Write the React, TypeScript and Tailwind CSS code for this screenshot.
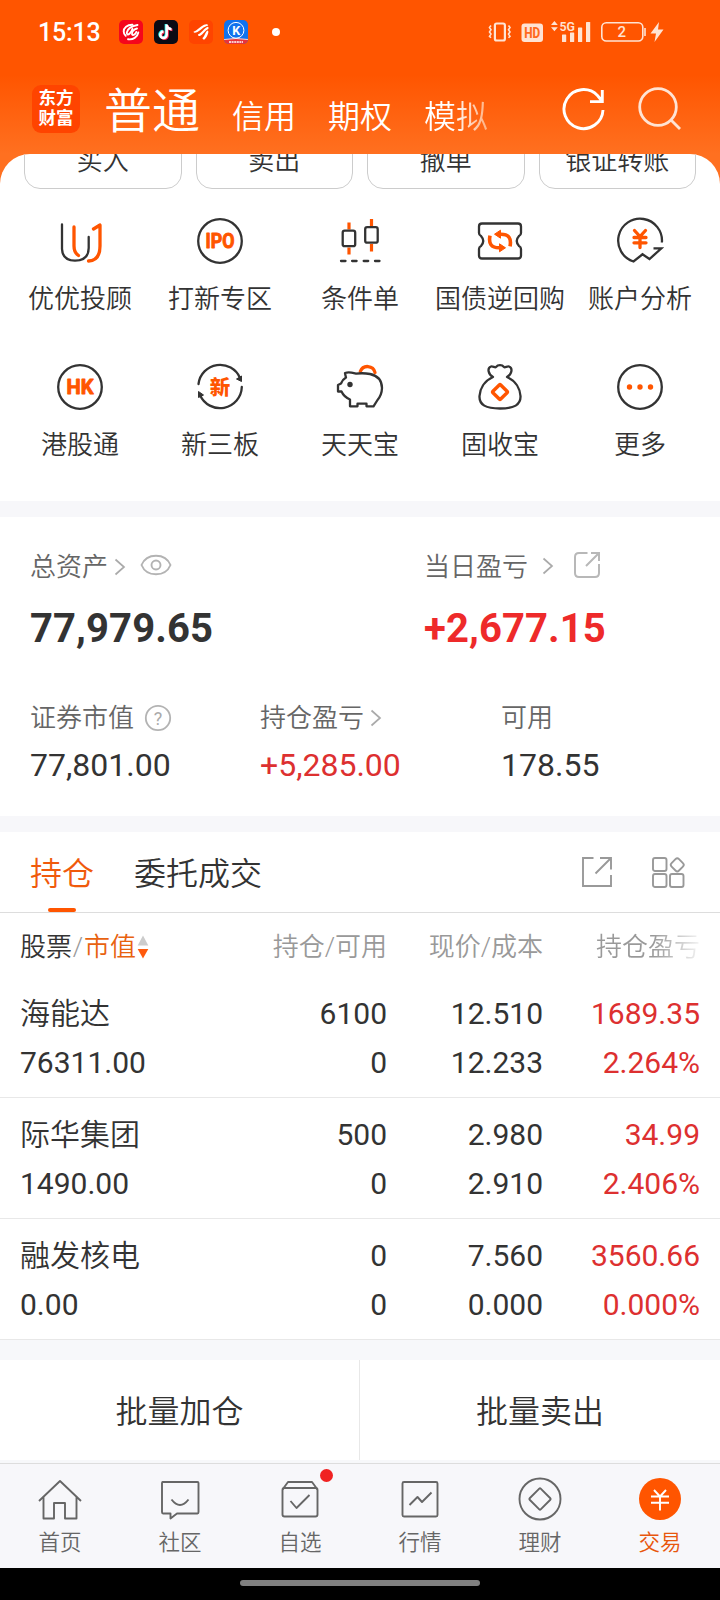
import React from "react";

const DARK = "#333333";
const ORANGE = "#ff5500";

/* ---------- status bar ---------- */

function StatusBar() {
  return (
    <div className="flex h-16 items-center pl-[38px] pr-[55px] text-white">
      <div className="w-[81px] font-[Roboto] text-[25px] leading-none font-medium tracking-[-0.2px]">15:13</div>
      <div className="flex items-center gap-[11px]">
        <svg width="24" height="24" viewBox="0 0 24 24">
          <rect width="24" height="24" rx="5" fill="#f5061c" />
          <g fill="none" stroke="#fff" strokeWidth="1.900" strokeLinecap="round">
            <path d="M13.500 4.700C8 4.500 4.700 8 4.700 11.500c0 2 .800 3.300 2 4.300" />
            <path d="M18.500 5C13 6 8.500 9 7.800 12.500c-.300 2 1.200 2.500 2.700 1.300 1.700-1.400 2.500-3 3-5" />
            <path d="M18 8.500c-3.500.700-5.500 3.500-5 5.700.800 1.800 3.500.300 4.300-2.200" />
            <path d="M9 19.200c5 .800 9.500-2 10.300-6.700" />
          </g>
        </svg>
        <svg width="24" height="24" viewBox="0 0 24 24">
          <rect width="24" height="24" rx="5" fill="#0b0b14" />
          <g fill="none" strokeWidth="2.500">
            <path d="M12.700 4.500v10.300a3.200 3.200 0 1 1-3.200-3.200M12.700 5c.300 2.600 2 4 4.800 4.200" stroke="#25f4ee" transform="translate(-.8 -.5)" />
            <path d="M12.700 4.500v10.300a3.200 3.200 0 1 1-3.200-3.200M12.700 5c.300 2.600 2 4 4.800 4.200" stroke="#fe2c55" transform="translate(.9 .7)" />
            <path d="M12.700 4.500v10.300a3.200 3.200 0 1 1-3.200-3.200M12.700 5c.300 2.600 2 4 4.800 4.200" stroke="#fff" />
          </g>
        </svg>
        <svg width="24" height="24" viewBox="0 0 24 24">
          <rect width="24" height="24" rx="5" fill="#ff4400" />
          <g fill="#fff">
            <path d="M4.500 11.700C8 10.500 11 7 15 4.800c2-.900 4-.600 4.200.600C15 6 11 11 7 12.600c-1.200.400-2.300 0-2.500-.900z" />
            <path d="M9 14.500C13 13 14.500 8.500 18.800 6.800c1 .300 1 1.700.300 2.300C16 10.500 14 14.500 11 16c-1.200.400-2.200-.500-2-1.500z" />
            <path d="M13.500 18c2.500-2 2.300-5.500 5-7.500 1 .300 1 1.500.700 2.500-.700 2.500-1.700 4.700-3.700 6.500-1.200.300-2-.500-2-1.500z" />
          </g>
        </svg>
        <svg width="24" height="24" viewBox="0 0 24 24">
          <defs>
            <clipPath id="app-k"><rect width="24" height="24" rx="5" /></clipPath>
          </defs>
          <g clipPath="url(#app-k)">
            <rect width="24" height="24" fill="#1173ee" />
            <path d="M0 19.500Q12 17.500 24 19.500V24H0z" fill="#e8343a" />
            <path d="M0 19.500Q12 17.500 24 19.500" stroke="#f5d9df" strokeWidth="1" fill="none" />
            <circle cx="12" cy="10.300" r="7.900" fill="none" stroke="#fff" strokeWidth="1" />
            <text x="12.200" y="14.700" textAnchor="middle" fontFamily="Roboto" fontWeight="700" fontSize="12.500" fill="#fff">K</text>
            <path d="M5 22h14" stroke="#fff" strokeWidth="1.600" strokeDasharray="2 .6" />
          </g>
        </svg>
      </div>
      <div className="ml-6 size-2 rounded-full bg-white" />
      <svg className="ml-auto" width="178" height="28" viewBox="487 18 178 28">
        <g fill="none" stroke="#ffe3d3">
          <rect x="494.900" y="23.500" width="10" height="17" rx="1.800" strokeWidth="2.200" />
          <path d="M491 25.500l-1.500 2 1.500 2.200-1.500 2.200 1.500 2.200-1.500 2.200 1.500 1.500M508.500 25.500l1.500 2-1.500 2.200 1.500 2.200-1.500 2.200 1.500 2.200-1.500 1.500" strokeWidth="1.600" />
          <rect x="601.800" y="22.800" width="41" height="18.200" rx="4.500" strokeWidth="1.600" />
          <path d="M645 28v8" strokeWidth="1.600" />
        </g>
        <g fill="#ffe3d3">
          <rect x="521.500" y="23.500" width="21.500" height="18.500" rx="3" />
          <text x="532.200" y="38" textAnchor="middle" fontFamily="Roboto" fontWeight="800" fontSize="15" textLength="16" lengthAdjust="spacingAndGlyphs" style={{ fill: "#ff6a20" }}>HD</text>
          <path d="M551 25l3.400-4 3.400 4zM551 27.200l3.400 4 3.400-4z" />
          <text x="559.500" y="30.700" fontFamily="Roboto" fontWeight="600" fontSize="13" textLength="15.500" lengthAdjust="spacingAndGlyphs">5G</text>
          <rect x="562" y="34.500" width="4.200" height="7.500" rx=".6" />
          <rect x="570" y="32.500" width="4.200" height="9.500" rx=".6" />
          <rect x="578" y="27.500" width="4.200" height="14.500" rx=".6" />
          <rect x="586" y="22" width="4.200" height="20" rx=".6" />
          <text x="621.800" y="37.300" textAnchor="middle" fontFamily="Roboto" fontWeight="500" fontSize="15">2</text>
          <path d="M659 22l-8.500 11.500h5.500l-1.500 8.500 9-12.500h-5.500z" />
        </g>
      </svg>
    </div>
  );
}

/* ---------- title bar ---------- */

function TitleBar() {
  return (
    <div className="flex h-[90px] items-start pl-8 pr-[38px] text-white">
      <div className="mt-[21px] flex size-12 flex-col items-center justify-center rounded-[9px] bg-[#ff4400] pb-0.5 text-[17.500px] leading-5 font-bold">
        <span>东方</span>
        <span>财富</span>
      </div>
      <div className="ml-6 flex items-baseline gap-8 pt-3 text-[32px] leading-[72px]">
        <span className="text-[48px]">普通</span>
        <span>信用</span>
        <span>期权</span>
        <span className="bg-[linear-gradient(90deg,#fff_45%,#ffb080_100%)] bg-clip-text text-transparent">模拟</span>
      </div>
      <svg className="mt-[22px] ml-auto" width="44" height="46" viewBox="562 86 44 46" fill="none" stroke="#fff" strokeWidth="2.900">
        <path d="M603 110A19.500 19.500 0 1 1 597.500 95.500L602 101M602.300 90v11.600H590" />
      </svg>
      <svg className="mt-[22px] ml-8" width="44" height="46" viewBox="638 86 44 46" fill="none" stroke="#ffe3d3" strokeWidth="2.800">
        <circle cx="658" cy="107" r="18.300" />
        <path d="M670.500 119.500l9.500 9.500" />
      </svg>
    </div>
  );
}

/* ---------- shortcuts ---------- */

const line = { fill: "none", stroke: DARK, strokeWidth: 2.3, strokeLinecap: "round", strokeLinejoin: "round" } as const;
const accent = { fill: "none", stroke: ORANGE, strokeWidth: 3.6, strokeLinecap: "round", strokeLinejoin: "round" } as const;
const glyph = { textAnchor: "middle", fontFamily: "Roboto", fontWeight: 700, lengthAdjust: "spacingAndGlyphs", fill: ORANGE, stroke: ORANGE, strokeWidth: 0.9, strokeLinejoin: "round" } as const;

function Icon({ children }: { children: React.ReactNode }) {
  return (
    <svg width="48" height="48" viewBox="-24 -24 48 48">
      {children}
    </svg>
  );
}

const shortcuts: { label: string; icon: React.ReactNode }[] = [
  {
    label: "优优投顾",
    icon: (
      <>
        <path {...line} d="M-18-16.500V8Q-17.500 19.500-5 19.700Q8.700 19.500 8.700 7V-4" />
        <path {...accent} strokeWidth={3.3} d="M-6-14V5Q-6 11.500-1.500 14.500M13.500-12L20-16V5Q20 19.500 8.500 20" />
      </>
    ),
  },
  {
    label: "打新专区",
    icon: (
      <>
        <circle {...line} r="21.800" />
        <text {...glyph} y="7" fontSize="19.500" textLength="29">IPO</text>
      </>
    ),
  },
  {
    label: "条件单",
    icon: (
      <>
        <path {...accent} strokeWidth={3.2} strokeLinecap="butt" d="M-11-18.500v7M-11 6.500v7M11.500-22v7M11.500 3v7.500" />
        <rect {...line} x="-17.300" y="-10.300" width="12.500" height="15.500" rx="2" />
        <rect {...line} x="5.200" y="-13.800" width="12.500" height="15.500" rx="2" />
        <path {...line} d="M-19 20h4.500M-7.900 20h4.500M3.700 20h4.500M15 20h4.500" />
      </>
    ),
  },
  {
    label: "国债逆回购",
    icon: (
      <>
        <path {...line} d="M-18-17.500H18Q21-17.500 21-14.500V-8Q21-6 19-5Q14.500 0 19 5Q21 6 21 8V14.500Q21 17.500 18 17.500H-18Q-21 17.500-21 14.500V8Q-21 6-19 5Q-14.500 0-19-5Q-21-6-21-8V-14.500Q-21-17.500-18-17.500z" />
        <path {...accent} strokeLinecap="butt" d="M-10-5.300Q-12.500 6.700-1 6.800H2M10 5.300Q12.500-6.700 1-6.800H-2" />
        <path d="M-5.500-6.800L.5-10.800V-2.800zM5.500 6.800L-.5 10.800V2.800z" fill={ORANGE} stroke={ORANGE} strokeLinejoin="round" />
      </>
    ),
  },
  {
    label: "账户分析",
    icon: (
      <>
        <path {...line} strokeLinecap="butt" strokeLinejoin="miter" d="M21.900 1.500A21.900 21.900 0 1 0-6.500 20.500L2.500 13.300L9.500 18L21.500 7.300H13.500" />
        <path {...accent} strokeWidth={3.300} d="M-5.500-10.500L0-4.500L5.500-10.500M0-4.500V6.500M-6-3.500H6M-6 1.800H6" />
      </>
    ),
  },
  {
    label: "港股通",
    icon: (
      <>
        <circle {...line} r="21.800" />
        <text {...glyph} y="7" fontSize="19.500" textLength="27">HK</text>
      </>
    ),
  },
  {
    label: "新三板",
    icon: (
      <>
        <path {...line} d="M-21.500-3A21.700 21.700 0 0 1 20-9M21.800 0A21.800 21.800 0 0 1-20 8" />
        <path d="M16.500-8l5-3v5.500zM-16.500 8l-5 2.500v-6z" fill={DARK} stroke={DARK} />
        <text y="7.500" textAnchor="middle" fontFamily="Noto Sans CJK SC" fontWeight="900" fontSize="20.500" fill={ORANGE}>新</text>
      </>
    ),
  },
  {
    label: "天天宝",
    icon: (
      <>
        <path {...accent} strokeWidth={3.300} d="M.3-15.500A7.700 7.700 0 0 1 15-14.500" />
        <path {...line} d="M-15-14Q-12-15-8.500-14.300Q-6-13.700-4-13.300Q3-14.300 10-13Q21.800-10.500 22 1Q21.800 8 17.500 13L13.500 19.300H6.500V16.700H-2.500V19.300H-10V12.500Q-16 10-18.500 4.500H-22V-2L-19-3.500Q-17.500-7.500-14-9.500Q-14.500-11-15-14z" />
        <circle cx="-10" cy="-2.500" r="2.700" fill={DARK} />
      </>
    ),
  },
  {
    label: "固收宝",
    icon: (
      <>
        <path {...line} d="M-7-10C-12-13-13-19-9-20.500C-7-21-5-19-4-20C-2-22.500 2-22.500 4-20C5-19 7-21 9-20.500C13-19 12-13 7-10C16-6 20 2 20.500 9C21 18 14 21.500 0 21.500S-21 18-20.500 9C-20 2-16-6-7-10z" />
        <rect {...accent} strokeWidth={3.400} x="-5.500" y="-5.500" width="11" height="11" rx="1" transform="translate(0 5) rotate(45)" />
      </>
    ),
  },
  {
    label: "更多",
    icon: (
      <>
        <circle {...line} r="21.800" />
        <g fill={ORANGE}>
          <circle cx="-10.500" r="2.700" />
          <circle r="2.700" />
          <circle cx="10.500" r="2.700" />
        </g>
      </>
    ),
  },
];

function Shortcuts() {
  return (
    <div className="grid grid-cols-5 px-2.5 pt-7">
      {shortcuts.map((s) => (
        <div key={s.label} className="flex h-[146px] flex-col items-center">
          <Icon>{s.icon}</Icon>
          <span className="mt-[17px] text-[26px] leading-[34px] whitespace-nowrap">{s.label}</span>
        </div>
      ))}
    </div>
  );
}

/* ---------- assets ---------- */

function Chevron({ className = "" }: { className?: string }) {
  return (
    <svg className={className} width="12" height="18" viewBox="0 0 12 18" fill="none" stroke="#aaa" strokeWidth="1.700">
      <path d="M1.500 1.500L10 9l-8.500 7.500" />
    </svg>
  );
}

function Assets() {
  return (
    <div className="h-[299px] text-[26px] leading-[34px] text-[#666]">
      <div className="flex pt-[33px]">
        <div className="w-[424px] pl-[30px]">
          <div className="flex items-center">
            总资产
            <Chevron className="ml-[6px]" />
            <svg className="mb-1 ml-3.5" width="32" height="22" viewBox="0 0 32 22" fill="none" stroke="#b3b3b3" strokeWidth="1.900">
              <path d="M1.500 11C4 5 9.500 1.700 16 1.700S28 5 30.500 11C28 17 22.500 20.300 16 20.300S4 17 1.500 11z" />
              <circle cx="16" cy="11" r="4.500" />
            </svg>
          </div>
          <div className="mt-[22px] text-[40px] leading-[46px] font-bold tracking-[0.1px] text-[#333]">77,979.65</div>
        </div>
        <div>
          <div className="flex items-center">
            当日盈亏
            <Chevron className="mb-0.5 ml-[14px]" />
            <svg className="mb-1 ml-[19px]" width="28" height="28" viewBox="0 0 28 28" fill="none" stroke="#b8b8b8" strokeWidth="2">
              <path d="M14.500 2H6Q2 2 2 6V22Q2 26 6 26H22Q26 26 26 22V13M18 2h8v8M26 2L13 15" />
            </svg>
          </div>
          <div className="mt-[22px] text-[40px] leading-[46px] font-bold tracking-[0.1px] text-[#ee2a2a]">+2,677.15</div>
        </div>
      </div>
      <div className="mt-[49px] flex">
        <div className="w-[230px] pl-[30px]">
          <div className="flex items-center">
            证券市值
            <svg className="ml-[10px]" width="28" height="28" viewBox="0 0 28 28">
              <circle cx="14" cy="14" r="12.200" fill="none" stroke="#b3b3b3" strokeWidth="1.800" />
              <text x="14" y="20.500" textAnchor="middle" fontFamily="Roboto" fontWeight="400" fontSize="18" fill="#aaa">?</text>
            </svg>
          </div>
          <div className="mt-3 text-[32px] leading-9 font-normal text-[#333]">77,801.00</div>
        </div>
        <div className="w-[271px] pl-[30px]">
          <div className="flex items-center">
            持仓盈亏
            <Chevron className="ml-1.5" />
          </div>
          <div className="mt-3 text-[32px] leading-9 font-normal text-[#dd3030]">+5,285.00</div>
        </div>
        <div>
          <div>可用</div>
          <div className="mt-3 text-[32px] leading-9 font-normal text-[#333]">178.55</div>
        </div>
      </div>
    </div>
  );
}

/* ---------- holdings ---------- */

const holdings = [
  { name: "海能达", value: "76311.00", qty: "6100", free: "0", price: "12.510", cost: "12.233", profit: "1689.35", rate: "2.264%" },
  { name: "际华集团", value: "1490.00", qty: "500", free: "0", price: "2.980", cost: "2.910", profit: "34.99", rate: "2.406%" },
  { name: "融发核电", value: "0.00", qty: "0", free: "0", price: "7.560", cost: "0.000", profit: "3560.66", rate: "0.000%" },
];

function Holdings() {
  return (
    <div>
      <div className="flex h-[81px] items-start border-b border-[#ddd] pr-[34px] pl-[30px] text-[32px] leading-[42px]">
        <div className="flex h-[80px] flex-col items-center justify-between pt-[21px] text-[#f05a0c]">
          持仓
          <div className="h-1 w-7 rounded-sm bg-[#ff5500]" />
        </div>
        <div className="ml-10 pt-[21px]">委托成交</div>
        <svg className="mt-6 ml-auto" width="32" height="32" viewBox="0 0 32 32" fill="none" stroke="#999" strokeWidth="1.900">
          <path d="M12.500 2H2V30H30V19M19 2H30V13.500M30 2L14.500 17.500" />
        </svg>
        <svg className="mt-6 ml-[39px]" width="34" height="34" viewBox="0 0 34 34" fill="none" stroke="#999" strokeWidth="1.900">
          <rect x="1" y="2" width="13.500" height="13" rx="2" />
          <rect x="1" y="18" width="13.500" height="13" rx="2" />
          <rect x="18" y="18" width="13.500" height="13" rx="2" />
          <rect x="20" y="3.600" width="10.500" height="10.500" rx="2.500" transform="rotate(45 25.250 8.850)" />
        </svg>
      </div>
      <div className="grid h-[64px] grid-cols-[187px_180px_156px_157px] items-center px-5 pt-[3px] text-right text-[26px] leading-[34px] text-[#999]">
        <div className="flex items-center">
          <span className="text-[#333]">股票</span>
          <span className="w-3 text-center">/</span>
          <span className="text-[#e8620f]">市值</span>
          <svg className="ml-px" width="12" height="26" viewBox="0 0 12 26">
            <path d="M6 1.500l5.300 10H.7z" fill="#ccc" />
            <path d="M6 24.500l5.300-9.500H.7z" fill="#ff5a0c" />
          </svg>
        </div>
        <div>持仓/可用</div>
        <div>现价/成本</div>
        <div className="overflow-hidden pl-[53px] text-left whitespace-nowrap">
          <span className="bg-[linear-gradient(90deg,#999_55%,#f4f4f4_100%)] bg-clip-text text-transparent">持仓盈亏</span>
        </div>
      </div>
      {holdings.map((h) => (
        <div key={h.name} className="grid h-[121px] grid-cols-[187px_180px_156px_157px] content-center gap-y-[11px] border-b border-[#e8e8e8] px-5 pt-0.5 text-right text-[30px] leading-[38px] font-normal">
          <div className="text-left font-[350]">{h.name}</div>
          <div>{h.qty}</div>
          <div>{h.price}</div>
          <div className="text-[#dd3030]">{h.profit}</div>
          <div className="text-left">{h.value}</div>
          <div>{h.free}</div>
          <div>{h.cost}</div>
          <div className="text-[#dd3030]">{h.rate}</div>
        </div>
      ))}
    </div>
  );
}

/* ---------- bottom navigation ---------- */

const nav: { label: string; icon: React.ReactNode; active?: boolean; dot?: boolean }[] = [
  { label: "首页", icon: <path d="M-21 2L0-18L21 2M-16.500-2V19.500H-6V4H5V19.500H16.500V-2" /> },
  {
    label: "社区",
    icon: (
      <>
        <path d="M-17.500-17H17.500Q18.500-17 18.500-16V13Q18.500 14.500 17.500 14.500H-3L-9.500 19.500V14.500H-17Q-18 14.500-18 13V-16Q-18-17-17-17z" />
        <path d="M-8.500.5Q0 11.500 8.500.5" />
      </>
    ),
  },
  {
    label: "自选",
    dot: true,
    icon: (
      <>
        <rect x="-17.500" y="-11" width="35" height="28.500" rx="2" />
        <path d="M-17.500-9.500L-12-17H12L17.500-9.500M-9.500 2L-3.500 9L9.500-4" />
      </>
    ),
  },
  {
    label: "行情",
    icon: (
      <>
        <rect x="-17.500" y="-17" width="35" height="34.500" rx="1.500" />
        <path d="M-10.500 6L-2.500-2L2 3L11.500-6.500" />
      </>
    ),
  },
  {
    label: "理财",
    icon: (
      <>
        <circle r="20.500" />
        <rect x="-7.800" y="-7.800" width="15.600" height="15.600" rx="1" transform="rotate(45)" />
      </>
    ),
  },
  {
    label: "交易",
    active: true,
    icon: (
      <>
        <circle r="21" fill={ORANGE} stroke="none" />
        <path d="M-6-9L0-2.500L6-9M0-2.500V11.500M-9-2.500H9M-9 3.800H9" stroke="#fff" />
      </>
    ),
  },
];

function BottomNav() {
  return (
    <nav className="grid h-[105px] shrink-0 grid-cols-6 border-t border-[#ddd] bg-[#f7f7fa] pt-[13px] text-[21.500px] leading-[30px] text-[#666]">
      {nav.map((n) => (
        <div key={n.label} className="relative flex flex-col items-center">
          <svg width="44" height="44" viewBox="-22 -22 44 44" fill="none" stroke="#666" strokeWidth="1.900" strokeLinejoin="round">
            {n.icon}
          </svg>
          <span className={n.active ? "mt-[7px] text-[#e8560c]" : "mt-[7px]"}>{n.label}</span>
          {n.dot && <span className="absolute -top-2 left-[80px] size-[13px] rounded-full bg-[#f02222]" />}
        </div>
      ))}
    </nav>
  );
}

export default function App() {
  return (
    <div className="flex h-[1600px] w-[720px] flex-col overflow-hidden bg-white font-['Roboto','Noto_Sans_CJK_SC',sans-serif] font-[350] text-[#333]">
      <header className="h-[154px] shrink-0 bg-[linear-gradient(180deg,#ff5500_75px,#ff7020_154px)]">
        <StatusBar />
        <TitleBar />
      </header>
      <div className="shrink-0 bg-[#ff7020]">
        <section className="h-[347px] overflow-hidden rounded-t-[30px] bg-white">
          <div className="flex h-[35px] items-end gap-3.5 overflow-hidden px-6">
            {["买入", "卖出", "撤单", "银证转账"].map((t) => (
              <div key={t} className="flex h-[60px] flex-1 items-center justify-center rounded-2xl border border-[#ccc] pt-[3px] text-[26px] leading-none">
                {t}
              </div>
            ))}
          </div>
          <Shortcuts />
        </section>
      </div>
      <div className="h-4 shrink-0 bg-[#f7f7fa]" />
      <Assets />
      <div className="h-4 shrink-0 bg-[#f7f7fa]" />
      <Holdings />
      <div className="h-5 shrink-0 bg-[#f7f8fa]" />
      <div className="grid h-[100px] shrink-0 grid-cols-2 text-[32px]">
        <div className="flex items-center justify-center border-r border-[#e8e8e8] pt-[3px]">批量加仓</div>
        <div className="flex items-center justify-center pt-[3px]">批量卖出</div>
      </div>
      <div className="h-[3px] shrink-0 bg-[#f7f8fa]" />
      <BottomNav />
      <div className="flex h-8 shrink-0 justify-center bg-black pt-3">
        <div className="h-1.5 w-60 rounded-full bg-[#808080]" />
      </div>
    </div>
  );
}
